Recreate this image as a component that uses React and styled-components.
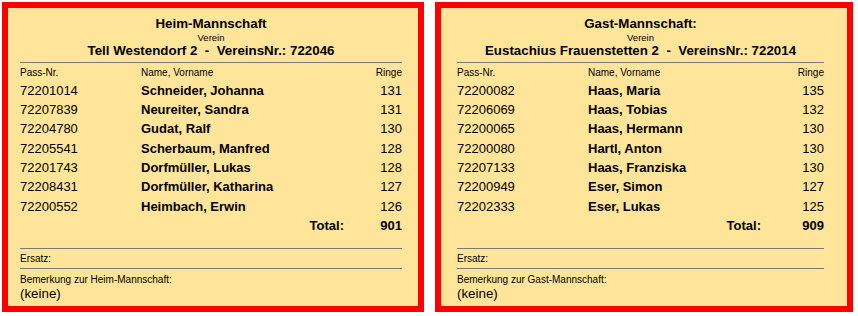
import React from 'react';
import styled, { createGlobalStyle } from 'styled-components';

const GlobalStyle = createGlobalStyle`
  body {
    margin: 0;
    background: #ffffff;
    font-family: "Liberation Sans", Arial, sans-serif;
    color: #000;
  }
`;

const Page = styled.div`
  display: grid;
  grid-template-columns: 422px 418px;
  column-gap: 11px;
  padding: 2px 0 0 2px;
`;

const Panel = styled.div`
  box-sizing: border-box;
  height: 310px;
  border: 6px solid #ff0000;
  background: #ffe599;
  padding: 7.5px ${p => p.$padRight}px 0 ${p => p.$padLeft}px;
`;

const Header = styled.div`
  text-align: center;
`;

const Title = styled.div`
  font-size: 13.33px;
  font-weight: bold;
  line-height: 16px;
`;

const Small = styled.div`
  font-size: 9.5px;
  line-height: 11px;
`;

const Club = styled.div`
  font-size: 13.33px;
  font-weight: bold;
  line-height: 16px;
  white-space: pre;
`;

const Rule = styled.div`
  border-top: 1px solid #7a7a7a;
  margin-top: ${p => p.$top}px;
`;

const Table = styled.div`
  display: grid;
  grid-template-columns: ${p => p.$pass}px 1fr ${p => p.$ringe}px;
  margin-top: 4.8px;
`;

const Label = styled.div`
  font-size: 10px;
  line-height: 12px;
  margin-bottom: 1.6px;
  text-align: ${p => (p.$right ? 'right' : 'left')};
`;

const Cell = styled.div`
  font-size: 13px;
  line-height: 19.3px;
  font-weight: ${p => (p.$bold ? 'bold' : 'normal')};
  text-align: ${p => (p.$right ? 'right' : 'left')};
`;

const Note = styled.div`
  font-size: 10px;
  line-height: 12px;
  margin-top: 4.5px;
`;

const Value = styled.div`
  font-size: 13.33px;
  line-height: 16px;
`;

const teams = [
  {
    title: 'Heim-Mannschaft',
    club: 'Tell Westendorf 2  -  VereinsNr.: 722046',
    note: 'Bemerkung zur Heim-Mannschaft:',
    padLeft: 12,
    padRight: 16,
    pass: 121,
    ringe: 58,
    total: 901,
    players: [
      ['72201014', 'Schneider, Johanna', 131],
      ['72207839', 'Neureiter, Sandra', 131],
      ['72204780', 'Gudat, Ralf', 130],
      ['72205541', 'Scherbaum, Manfred', 128],
      ['72201743', 'Dorfmüller, Lukas', 128],
      ['72208431', 'Dorfmüller, Katharina', 127],
      ['72200552', 'Heimbach, Erwin', 126],
    ],
  },
  {
    title: 'Gast-Mannschaft:',
    club: 'Eustachius Frauenstetten 2  -  VereinsNr.: 722014',
    note: 'Bemerkung zur Gast-Mannschaft:',
    padLeft: 16,
    padRight: 23,
    pass: 131,
    ringe: 63,
    total: 909,
    players: [
      ['72200082', 'Haas, Maria', 135],
      ['72206069', 'Haas, Tobias', 132],
      ['72200065', 'Haas, Hermann', 130],
      ['72200080', 'Hartl, Anton', 130],
      ['72207133', 'Haas, Franziska', 130],
      ['72200949', 'Eser, Simon', 127],
      ['72202333', 'Eser, Lukas', 125],
    ],
  },
];

const TeamPanel = ({ team }) => (
  <Panel $padLeft={team.padLeft} $padRight={team.padRight}>
    <Header>
      <Title>{team.title}</Title>
      <Small>Verein</Small>
      <Club>{team.club}</Club>
    </Header>
    <Rule $top={3} />
    <Table $pass={team.pass} $ringe={team.ringe}>
      <Label>Pass-Nr.</Label>
      <Label>Name, Vorname</Label>
      <Label $right>Ringe</Label>
      {team.players.map(([nr, name, ringe]) => (
        <React.Fragment key={nr}>
          <Cell>{nr}</Cell>
          <Cell $bold>{name}</Cell>
          <Cell $right>{ringe}</Cell>
        </React.Fragment>
      ))}
      <Cell />
      <Cell $bold $right>Total:</Cell>
      <Cell $bold $right>{team.total}</Cell>
    </Table>
    <Rule $top={12.5} />
    <Note>Ersatz:</Note>
    <Rule $top={3} />
    <Note>{team.note}</Note>
    <Value>(keine)</Value>
  </Panel>
);

const App = () => (
  <>
    <GlobalStyle />
    <Page>
      {teams.map(team => (
        <TeamPanel key={team.title} team={team} />
      ))}
    </Page>
  </>
);

export default App;
